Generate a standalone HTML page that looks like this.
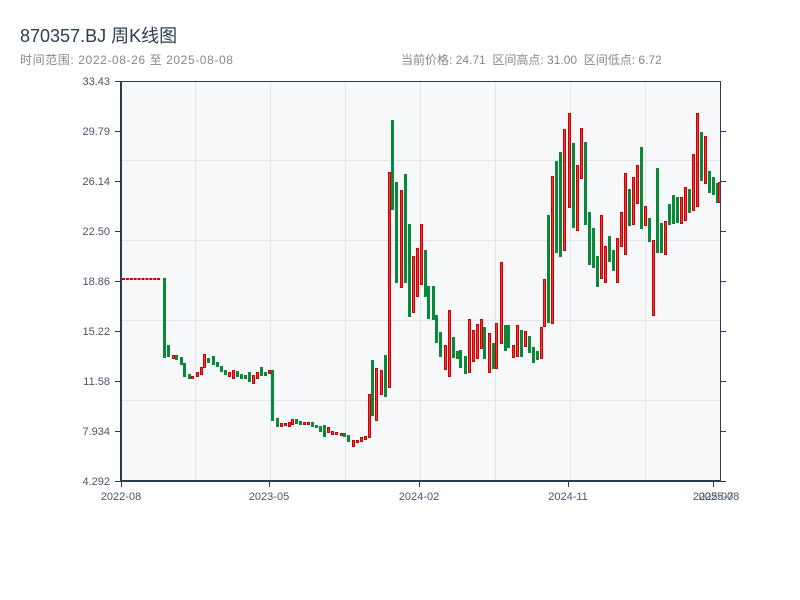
<!DOCTYPE html>
<html><head><meta charset="utf-8">
<style>
html,body{margin:0;padding:0;background:#fff;width:800px;height:600px;overflow:hidden;font-family:"Liberation Sans","Noto Sans CJK SC",sans-serif}
.t{position:absolute;left:20px;top:22px;font-size:18px;color:#2c3e50;white-space:nowrap}
.s{position:absolute;left:20px;top:51px;font-size:12px;color:#888;white-space:nowrap;letter-spacing:0.6px}
.r{position:absolute;left:401px;top:51px;font-size:12px;color:#888;white-space:pre}
svg{position:absolute;left:0;top:0}
</style></head><body>
<div class="t">870357.BJ 周K线图</div>
<div class="s">时间范围: 2022-08-26 至 2025-08-08</div>
<div class="r">当前价格: 24.71  区间高点: 31.00  区间低点: 6.72</div>
<svg id="c" width="800" height="600" xmlns="http://www.w3.org/2000/svg" font-family="Liberation Sans, sans-serif" font-size="11" fill="#4a5568">
<rect x="121" y="81" width="599" height="400" fill="#f7f8fa"/>
<g stroke="#e1e4e8" stroke-width="1">
<line x1="195.5" y1="81" x2="195.5" y2="481"/><line x1="270.5" y1="81" x2="270.5" y2="481"/><line x1="345.5" y1="81" x2="345.5" y2="481"/><line x1="420.5" y1="81" x2="420.5" y2="481"/><line x1="495.5" y1="81" x2="495.5" y2="481"/><line x1="570.5" y1="81" x2="570.5" y2="481"/><line x1="645.5" y1="81" x2="645.5" y2="481"/>
<line x1="121" y1="160.5" x2="720" y2="160.5"/><line x1="121" y1="240.5" x2="720" y2="240.5"/><line x1="121" y1="320.5" x2="720" y2="320.5"/><line x1="121" y1="400.5" x2="720" y2="400.5"/>
</g>
<g id="k"></g>
<g stroke="#2d3b4e">
<line x1="121" y1="81.5" x2="720" y2="81.5" stroke-width="1"/>
<line x1="121" y1="81" x2="121" y2="482" stroke-width="2"/>
<line x1="120" y1="481" x2="721" y2="481" stroke-width="2"/>
<line x1="720.5" y1="81" x2="720.5" y2="482" stroke-width="1"/>
<g stroke-width="1">
<line x1="115" y1="81.5" x2="121" y2="81.5"/><line x1="115" y1="131.5" x2="121" y2="131.5"/><line x1="115" y1="181.5" x2="121" y2="181.5"/><line x1="115" y1="231.5" x2="121" y2="231.5"/><line x1="115" y1="281.5" x2="121" y2="281.5"/><line x1="115" y1="331.5" x2="121" y2="331.5"/><line x1="115" y1="381.5" x2="121" y2="381.5"/><line x1="115" y1="431.5" x2="121" y2="431.5"/><line x1="115" y1="481.5" x2="121" y2="481.5"/>
<line x1="720" y1="131.5" x2="726" y2="131.5"/><line x1="720" y1="181.5" x2="726" y2="181.5"/><line x1="720" y1="231.5" x2="726" y2="231.5"/><line x1="720" y1="281.5" x2="726" y2="281.5"/><line x1="720" y1="331.5" x2="726" y2="331.5"/><line x1="720" y1="381.5" x2="726" y2="381.5"/><line x1="720" y1="431.5" x2="726" y2="431.5"/><line x1="720" y1="481.5" x2="726" y2="481.5"/>
<line x1="121.5" y1="481" x2="121.5" y2="487"/><line x1="269.5" y1="481" x2="269.5" y2="487"/><line x1="419.5" y1="481" x2="419.5" y2="487"/><line x1="568.5" y1="481" x2="568.5" y2="487"/><line x1="713.5" y1="481" x2="713.5" y2="487"/>
</g></g>
<g text-anchor="end">
<text x="110" y="85">33.43</text><text x="110" y="135">29.79</text><text x="110" y="185">26.14</text><text x="110" y="235">22.50</text><text x="110" y="285">18.86</text><text x="110" y="335">15.22</text><text x="110" y="385">11.58</text><text x="110" y="435">7.934</text><text x="110" y="485">4.292</text>
</g>
<g text-anchor="middle">
<text x="121" y="500">2022-08</text><text x="269" y="500">2023-05</text><text x="419" y="500">2024-02</text><text x="568" y="500">2024-11</text><text x="713" y="500">2025-07</text><text x="719" y="500">2025-08</text>
</g>
</svg>
<script>
var d=[];
for(var x=123;x<=161;x+=3.9)d.push([x,278,280,'r']);
d=d.concat([[164,278,358,'g'],[168,345,357,'g'],[173,355,359,'r'],[176,355,360,'g'],[181,357,365,'g'],[184,363,377,'g'],[189,374,379,'g'],[192,376,379,'r'],[197,372,377,'r'],[201,367,375,'r'],[204,354,368,'r'],[208,358,363,'g'],[213,356,365,'g'],[217,362,367,'g'],[221,366,372,'g'],[225,370,375,'g'],[229,372,377,'r'],[233,370,379,'r'],[237,371,377,'g'],[241,374,379,'g'],[245,375,379,'g'],[249,372,382,'g'],[253,375,384,'r'],[257,372,379,'r'],[261,367,376,'g'],[265,372,376,'g'],[269,370,374,'r'],[272,370,421,'g'],[277,418,427,'g'],[281,423,427,'r'],[285,423,426,'r'],[289,422,427,'r'],[292,419,425,'r'],[296,419,424,'g'],[300,421,425,'g'],[304,422,425,'r'],[308,422,425,'r'],[312,422,427,'g'],[316,425,428,'g'],[320,426,432,'g'],[324,425,437,'g'],[328,427,433,'r'],[332,431,435,'r'],[336,432,435,'r'],
[341,433,436,'r'],[344,433,437,'g'],[348,435,442,'g'],[353,440,447,'r'],[357,440,443,'r'],[361,437,442,'r'],[365,436,440,'r'],[369,394,438,'r'],[372,360,416,'g'],[376,368,421,'r'],[381,370,395,'r'],[385,355,397,'g'],[389,172,388,'r'],[392,120,210,'g'],[396,182,283,'g'],[401,190,288,'r'],[405,174,283,'g'],[409,224,317,'g'],[413,256,313,'r'],[417,248,297,'r'],[421,224,285,'r'],[425,250,297,'g'],[428,286,319,'g'],[433,286,320,'g'],[436,315,343,'g'],[440,332,357,'g'],[445,345,370,'r'],[449,310,377,'r'],[453,337,358,'g'],[457,351,359,'g'],[460,350,368,'g'],[465,356,374,'g'],[469,319,373,'r'],[473,330,362,'r'],[477,324,359,'r'],[481,319,349,'r'],[484,327,359,'g'],[489,333,373,'r'],[493,343,369,'g'],[496,323,369,'r'],[501,262,344,'r'],[505,325,351,'g'],[508,325,348,'g'],[513,345,358,'r'],[517,325,357,'r'],[521,330,357,'g'],[525,331,347,'r'],[529,336,353,'g'],[533,347,363,'g'],[537,351,360,'g'],[541,327,359,'r'],[544,279,327,'r'],[548,215,323,'g'],[552,176,324,'r'],[556,161,253,'g'],[560,152,257,'g'],[564,129,251,'r'],[569,113,208,'r'],[573,143,228,'g'],[577,165,231,'r'],[581,128,179,'r'],[585,142,225,'g'],[589,212,265,'g'],[593,228,268,'g'],[597,256,287,'g'],[601,215,279,'r'],[605,246,283,'r'],[609,236,262,'g'],[613,250,271,'g'],[617,238,283,'r'],[621,212,247,'r'],[625,173,255,'r'],[629,189,226,'g'],[633,177,225,'r'],[637,165,204,'r'],[641,147,229,'g'],[645,206,226,'r'],[649,218,242,'g'],[653,240,316,'r'],[657,168,253,'g'],[661,223,253,'g'],[665,221,255,'r'],[669,204,225,'g'],[673,195,224,'g'],[677,197,223,'g'],[681,197,224,'r'],[685,187,221,'r'],[689,189,213,'g'],[693,154,211,'r'],[697,113,207,'r'],[701,132,181,'g'],[705,136,184,'r'],[709,171,193,'g'],[713,177,195,'g'],[717,183,203,'g'],[719,182,203,'r']]);
var s='';
d.forEach(function(c){var x=c[0]-1,y=c[1],h=Math.max(2,c[2]-c[1]);
if(c[3]=='g')s+='<rect x="'+x+'" y="'+y+'" width="3" height="'+h+'" fill="#08893a"/>';
else s+='<rect x="'+(x+0.5)+'" y="'+(y+0.5)+'" width="2" height="'+Math.max(1,h-1)+'" fill="#f03a3a" stroke="#cc0000" stroke-width="1"/>';});
document.getElementById('k').innerHTML=s;
</script>
</body></html>
